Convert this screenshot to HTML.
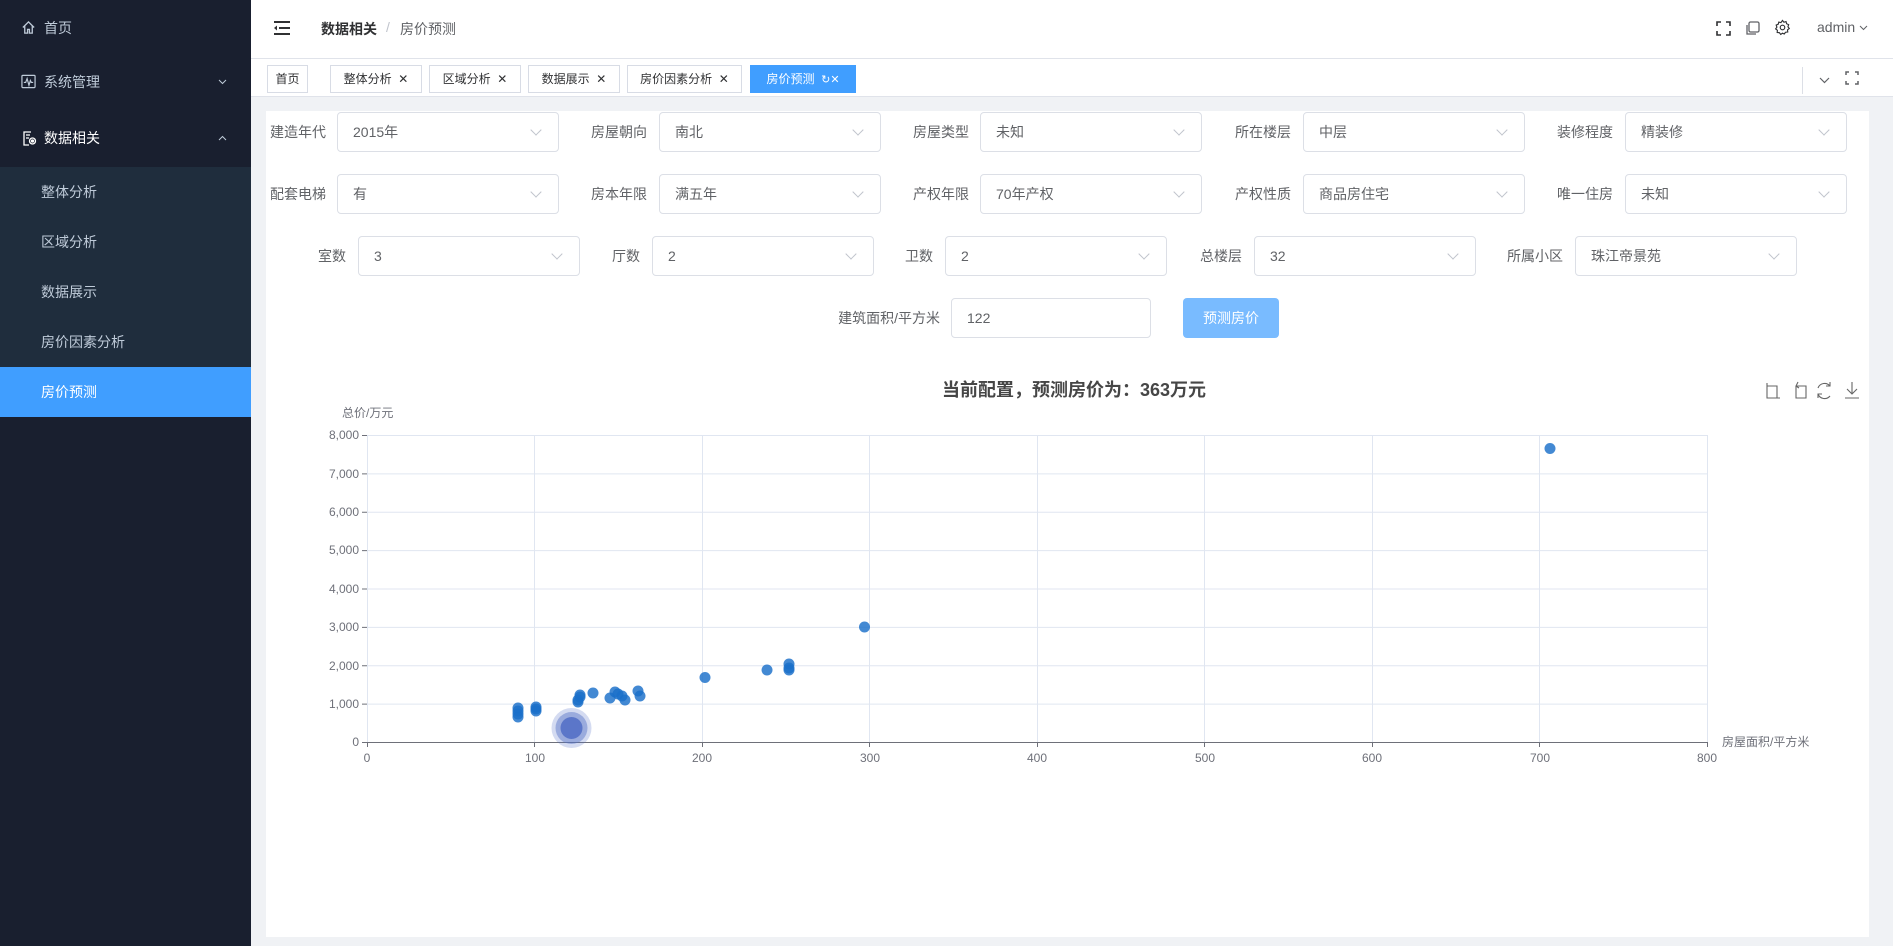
<!DOCTYPE html>
<html><head><meta charset="utf-8">
<style>
*{margin:0;padding:0;box-sizing:border-box}
body{width:1893px;height:946px;overflow:hidden;font-family:"Liberation Sans","Noto Sans CJK SC",sans-serif;font-size:14px;color:#606266;background:#f0f2f5;position:relative}
.a{position:absolute}
.side{left:0;top:0;width:251px;height:946px;background:#191f2f}
.mi{position:absolute;left:0;width:251px;height:56px;line-height:56px;color:#bfcbd9;font-size:14px;padding-left:44px}
.sub{position:absolute;left:0;top:167px;width:251px;height:250px;background:#1f2d3d}
.si{position:absolute;left:0;width:251px;height:50px;line-height:50px;color:#bfcbd9;padding-left:41px}
.hdr{left:251px;top:0;width:1642px;height:59px;background:#fff;border-bottom:1px solid #e0e3ea}
.tabs{left:251px;top:59px;width:1642px;height:38px;background:#fff;border-bottom:1px solid #e0e3ea}
.tab{position:absolute;top:65px;height:28px;line-height:26px;border:1px solid #d8dce5;background:#fff;color:#303133;font-size:12px;text-align:center}
.card{left:266px;top:111px;width:1603px;height:826px;background:#fff}
.lb{position:absolute;font-size:14px;color:#606266;line-height:40px;text-align:right}
.sel{position:absolute;height:40px;border:1px solid #dcdfe6;border-radius:4px;background:#fff;line-height:38px;padding-left:15px;color:#606266}
.sel:after{content:"";position:absolute;right:18px;top:13px;width:7px;height:7px;border-right:1px solid #c0c4cc;border-bottom:1px solid #c0c4cc;transform:rotate(45deg)}
</style></head><body>
<div class="a side">
 <div class="mi" style="top:0"><svg class="a" style="left:21px;top:20px" width="15" height="15" viewBox="0 0 16 16" fill="none" stroke="#bfcbd9" stroke-width="1.4"><path d="M2 8 8 2l6 6M4 6.5V14h3v-4h2v4h3V6.5"/></svg>首页</div>
 <div class="mi" style="top:54px"><svg class="a" style="left:21px;top:20px" width="15" height="15" viewBox="0 0 16 16" fill="none" stroke="#bfcbd9" stroke-width="1.3"><rect x="1" y="1.5" width="14" height="13" rx="1"/><path d="M3 9h2l1.5-4 2 7 1.5-5 1 2h2"/></svg>系统管理<svg class="a" style="left:218px;top:25px" width="9" height="6" viewBox="0 0 9 6" fill="none" stroke="#bfcbd9"><path d="M1 1l3.5 3.5L8 1"/></svg></div>
 <div class="mi" style="top:110px;color:#fff"><svg class="a" style="left:21px;top:20px" width="16" height="16" viewBox="0 0 16 16" fill="none" stroke="#fff" stroke-width="1.3"><path d="M10 2H3v13h5M5 5h4M5 8h3"/><circle cx="11.5" cy="11" r="3"/><circle cx="11.5" cy="11" r="1" fill="#fff"/></svg>数据相关<svg class="a" style="left:218px;top:25px" width="9" height="6" viewBox="0 0 9 6" fill="none" stroke="#bfcbd9"><path d="M1 5l3.5-3.5L8 5"/></svg></div>
 <div class="sub"></div>
 <div class="si" style="top:167px">整体分析</div>
 <div class="si" style="top:217px">区域分析</div>
 <div class="si" style="top:267px">数据展示</div>
 <div class="si" style="top:317px">房价因素分析</div>
 <div class="si" style="top:367px;background:#409eff;color:#fff">房价预测</div>
</div>
<div class="a hdr">
 <svg class="a" style="left:23px;top:21px" width="16" height="14" viewBox="0 0 16 14"><rect x="0" y="0" width="16" height="2" fill="#303133"/><rect x="5" y="6" width="11" height="2" fill="#303133"/><rect x="0" y="12" width="16" height="2" fill="#303133"/><path d="M0 7l3-2.5v5z" fill="#303133"/></svg>
 <div class="a" style="left:70px;top:19px;font-size:14px;color:#303133;font-weight:bold">数据相关</div>
 <div class="a" style="left:135px;top:19px;color:#c0c4cc">/</div>
 <div class="a" style="left:149px;top:19px;color:#606266">房价预测</div>
 <svg class="a" style="left:1465px;top:21px" width="15" height="15" viewBox="0 0 15 15" fill="none" stroke="#303133" stroke-width="1.6"><path d="M1 5V1h4M10 1h4v4M14 10v4h-4M5 14H1v-4"/></svg>
 <svg class="a" style="left:1494px;top:21px" width="15" height="15" viewBox="0 0 15 15" fill="none" stroke="#606266" stroke-width="1.3"><rect x="4" y="1" width="10" height="10" rx="1.5"/><path d="M2 4v9h9"/></svg>
 <svg class="a" style="left:1523px;top:19px" width="17" height="17" viewBox="0 0 24 24" fill="none" stroke="#303133" stroke-width="1.6"><circle cx="12" cy="12" r="3.2"/><path d="M12 2l2 2.5 3-.8.8 3 2.9 1.3-1 2.9 1.9 2.5-2.5 1.9.3 3.1-3.1.3-1.9 2.5L12 20l-2.5 1.8-1.9-2.5-3.1-.3.3-3.1L2.3 14l1.8-2.5-1-2.9L6 7.3l.8-3 3 .8z"/></svg>
 <div class="a" style="left:1566px;top:19px;font-size:14px;color:#606266">admin</div>
 <svg class="a" style="left:1608px;top:25px" width="9" height="6" viewBox="0 0 9 6" fill="none" stroke="#606266"><path d="M1 1l3.5 3.5L8 1"/></svg>
</div>
<div class="a tabs">
 <div class="a" style="left:1551px;top:8px;width:1px;height:27px;background:#dcdfe6"></div>
 <svg class="a" style="left:1568px;top:18px" width="11" height="7" viewBox="0 0 11 7" fill="none" stroke="#606266" stroke-width="1.2"><path d="M1 1l4.5 4.5L10 1"/></svg>
 <svg class="a" style="left:1594px;top:12px" width="14" height="14" viewBox="0 0 14 14" fill="none" stroke="#606266" stroke-width="1.5"><path d="M1 4V1h3M10 1h3v3M13 10v3h-3M4 13H1v-3"/></svg>
</div>
<div class="tab" style="left:267px;width:41px">首页</div>
<div class="tab" style="left:330px;width:92px">整体分析 &nbsp;✕</div>
<div class="tab" style="left:429px;width:92px">区域分析 &nbsp;✕</div>
<div class="tab" style="left:528px;width:92px">数据展示 &nbsp;✕</div>
<div class="tab" style="left:627px;width:115px">房价因素分析 &nbsp;✕</div>
<div class="tab" style="left:750px;width:106px;background:#409eff;border-color:#409eff;color:#fff">房价预测 &nbsp;<span style="font-size:11px">↻✕</span></div>
<div class="a card"></div>
<div class="lb" style="left:256px;top:112px;width:70px">建造年代</div><div class="sel" style="left:337px;top:112px;width:222px">2015年</div>
<div class="lb" style="left:577px;top:112px;width:70px">房屋朝向</div><div class="sel" style="left:659px;top:112px;width:222px">南北</div>
<div class="lb" style="left:899px;top:112px;width:70px">房屋类型</div><div class="sel" style="left:980px;top:112px;width:222px">未知</div>
<div class="lb" style="left:1221px;top:112px;width:70px">所在楼层</div><div class="sel" style="left:1303px;top:112px;width:222px">中层</div>
<div class="lb" style="left:1543px;top:112px;width:70px">装修程度</div><div class="sel" style="left:1625px;top:112px;width:222px">精装修</div>
<div class="lb" style="left:256px;top:174px;width:70px">配套电梯</div><div class="sel" style="left:337px;top:174px;width:222px">有</div>
<div class="lb" style="left:577px;top:174px;width:70px">房本年限</div><div class="sel" style="left:659px;top:174px;width:222px">满五年</div>
<div class="lb" style="left:899px;top:174px;width:70px">产权年限</div><div class="sel" style="left:980px;top:174px;width:222px">70年产权</div>
<div class="lb" style="left:1221px;top:174px;width:70px">产权性质</div><div class="sel" style="left:1303px;top:174px;width:222px">商品房住宅</div>
<div class="lb" style="left:1543px;top:174px;width:70px">唯一住房</div><div class="sel" style="left:1625px;top:174px;width:222px">未知</div>
<div class="lb" style="left:276px;top:236px;width:70px">室数</div><div class="sel" style="left:358px;top:236px;width:222px">3</div>
<div class="lb" style="left:570px;top:236px;width:70px">厅数</div><div class="sel" style="left:652px;top:236px;width:222px">2</div>
<div class="lb" style="left:863px;top:236px;width:70px">卫数</div><div class="sel" style="left:945px;top:236px;width:222px">2</div>
<div class="lb" style="left:1172px;top:236px;width:70px">总楼层</div><div class="sel" style="left:1254px;top:236px;width:222px">32</div>
<div class="lb" style="left:1493px;top:236px;width:70px">所属小区</div><div class="sel" style="left:1575px;top:236px;width:222px">珠江帝景苑</div>
<div class="lb" style="left:800px;top:298px;width:140px">建筑面积/平方米</div>
<div class="a" style="left:1183px;top:298px;width:96px;height:40px;background:#79bbff;border-radius:4px;color:#fff;text-align:center;line-height:40px">预测房价</div>
<div class="a" style="left:951px;top:298px;width:200px;height:40px;background:#fff;border:1px solid #dcdfe6;border-radius:4px;line-height:38px;padding-left:15px">122</div>
<svg class="a" style="left:0;top:0" width="1893" height="946">
 <text x="1074" y="396" text-anchor="middle" font-size="18" font-weight="bold" fill="#464646" font-family="Liberation Sans,Noto Sans CJK SC,sans-serif">当前配置，预测房价为：363万元</text>
 <g fill="none" stroke="#666" stroke-width="1.1">
  <path d="M1767 383v15h13M1767 386h10v12"/>
  <path d="M1796 386h10v12h-10v-12M1798 382l-2 4 3 2"/>
  <path d="M1830 386a7 7 0 0 0-12 2M1818 394a7 7 0 0 0 12 2M1830 382v4h-4M1818 398v-4h4"/>
  <path d="M1852 382v12M1847 389l5 5 5-5M1845 398h14"/>
 </g>
 <g stroke="#e0e6f1" stroke-width="1">
  <path d="M367 435.5H1707M367 473.9H1707M367 512.3H1707M367 550.6H1707M367 589H1707M367 627.4H1707M367 665.8H1707M367 704.1H1707"/>
  <path d="M534.5 435V742M702.5 435V742M869.5 435V742M1037.5 435V742M1204.5 435V742M1372.5 435V742M1539.5 435V742M1707.5 435V742"/>
 </g>
 <path d="M367.5 435V742" stroke="#e0e6f1"/>
 <path d="M367 742.5H1707" stroke="#6e7079" stroke-width="1"/>
 <g stroke="#6e7079"><path d="M362 435.5h5M362 473.9h5M362 512.3h5M362 550.6h5M362 589h5M362 627.4h5M362 665.8h5M362 704.1h5M362 742.5h5"/>
 <path d="M367.5 742v5M534.5 742v5M702.5 742v5M869.5 742v5M1037.5 742v5M1204.5 742v5M1372.5 742v5M1539.5 742v5M1707.5 742v5"/></g>
 <g font-size="12" fill="#6e7079" text-anchor="end" font-family="Liberation Sans,sans-serif">
  <text x="359" y="439">8,000</text><text x="359" y="478">7,000</text><text x="359" y="516">6,000</text><text x="359" y="554">5,000</text><text x="359" y="593">4,000</text><text x="359" y="631">3,000</text><text x="359" y="670">2,000</text><text x="359" y="708">1,000</text><text x="359" y="746">0</text>
 </g>
 <g font-size="12" fill="#6e7079" text-anchor="middle" font-family="Liberation Sans,sans-serif">
  <text x="367" y="762">0</text><text x="535" y="762">100</text><text x="702" y="762">200</text><text x="870" y="762">300</text><text x="1037" y="762">400</text><text x="1205" y="762">500</text><text x="1372" y="762">600</text><text x="1540" y="762">700</text><text x="1707" y="762">800</text>
 </g>
 <text x="342" y="417" font-size="12" fill="#6e7079" font-family="Liberation Sans,Noto Sans CJK SC,sans-serif">总价/万元</text>
 <text x="1722" y="746" font-size="12" fill="#6e7079" font-family="Liberation Sans,Noto Sans CJK SC,sans-serif">房屋面积/平方米</text>
 <g fill="#1a6fc9" fill-opacity="0.82">
  <circle cx="518" cy="717" r="5.5"/><circle cx="518" cy="714" r="5.5"/><circle cx="518" cy="711" r="5.5"/><circle cx="518" cy="708" r="5.5"/>
  <circle cx="536" cy="711" r="5.5"/><circle cx="536" cy="709" r="5.5"/><circle cx="536" cy="707" r="5.5"/>
  <circle cx="578" cy="702" r="5.5"/><circle cx="578" cy="700" r="5.5"/><circle cx="580" cy="697" r="5.5"/><circle cx="580" cy="695" r="5.5"/>
  <circle cx="593" cy="693" r="5.5"/><circle cx="610" cy="698" r="5.5"/><circle cx="615" cy="692" r="5.5"/><circle cx="618" cy="694" r="5.5"/><circle cx="622" cy="696" r="5.5"/><circle cx="625" cy="700" r="5.5"/>
  <circle cx="638" cy="691" r="5.5"/><circle cx="640" cy="696" r="5.5"/>
  <circle cx="705" cy="677.5" r="5.5"/><circle cx="767" cy="670" r="5.5"/><circle cx="789" cy="670" r="5.5"/><circle cx="789" cy="668" r="5.5"/><circle cx="789" cy="664" r="5.5"/>
  <circle cx="864.5" cy="627" r="5.5"/><circle cx="1550" cy="448.5" r="5.5"/>
 </g>
 <circle cx="571.5" cy="728" r="20" fill="#5470c6" fill-opacity="0.25"/>
 <circle cx="571.5" cy="728" r="16" fill="#5470c6" fill-opacity="0.45"/>
 <circle cx="571.5" cy="728" r="11" fill="#5470c6" fill-opacity="0.9"/>
</svg>
</body></html>
